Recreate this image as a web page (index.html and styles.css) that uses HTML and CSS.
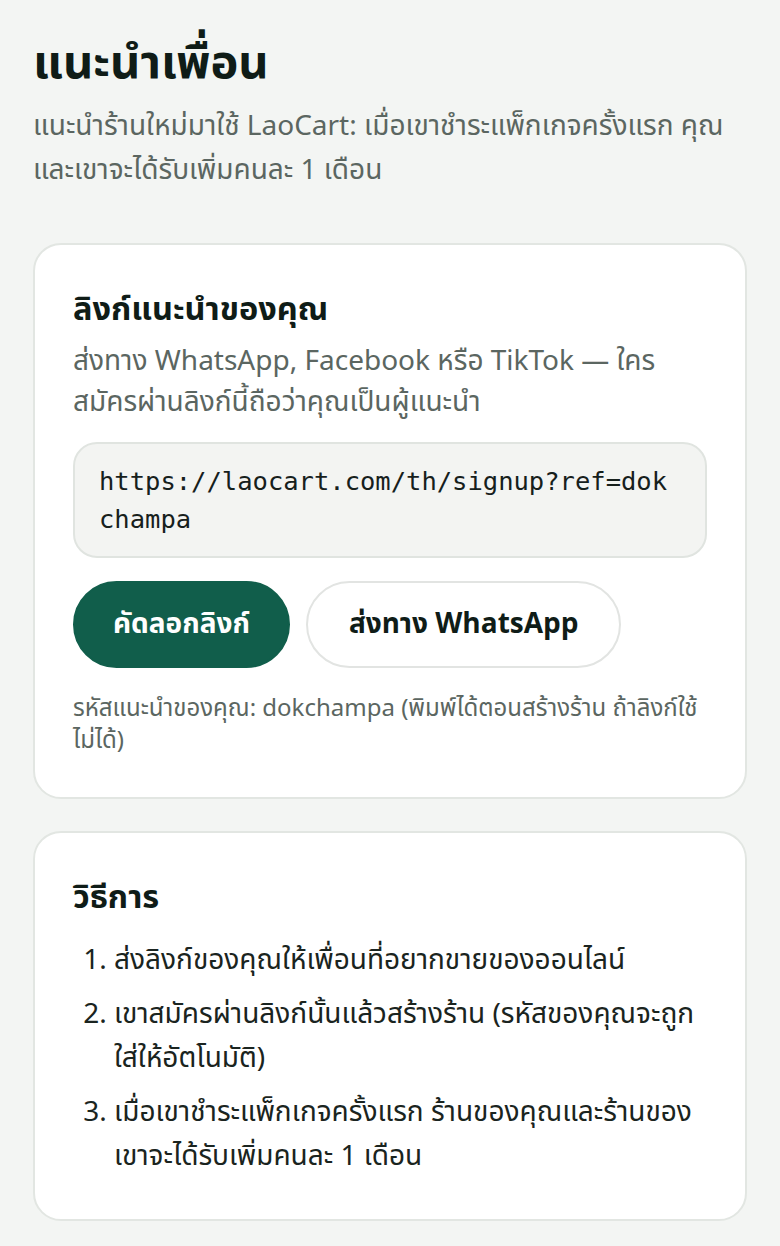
FILE: index.html
```html
<!DOCTYPE html>
<html lang="th">
<head>
<meta charset="utf-8">
<title>แนะนำเพื่อน</title>
<link rel="stylesheet" href="styles.css">
</head>
<body>
<main class="page">
  <h1 class="title">แนะนำเพื่อน</h1>
  <p class="lead">แนะนำร้านใหม่มาใช้ LaoCart: เมื่อเขาชำระแพ็กเกจครั้งแรก คุณและเขาจะได้รับเพิ่มคนละ 1 เดือน</p>

  <section class="card">
    <h2 class="card-title">ลิงก์แนะนำของคุณ</h2>
    <p class="card-desc">ส่งทาง WhatsApp, Facebook หรือ TikTok — ใครสมัครผ่านลิงก์นี้ถือว่าคุณเป็นผู้แนะนำ</p>
    <div class="code-box">https://laocart.com/th/signup?ref=dokchampa</div>
    <div class="actions">
      <button class="btn btn-primary">คัดลอกลิงก์</button>
      <button class="btn btn-outline">ส่งทาง WhatsApp</button>
    </div>
    <p class="note">รหัสแนะนำของคุณ: dokchampa (พิมพ์ได้ตอนสร้างร้าน ถ้าลิงก์ใช้ไม่ได้)</p>
  </section>

  <section class="card">
    <h2 class="card-title">วิธีการ</h2>
    <ol class="steps">
      <li>ส่งลิงก์ของคุณให้เพื่อนที่อยากขายของออนไลน์</li>
      <li>เขาสมัครผ่านลิงก์นั้นแล้วสร้างร้าน (รหัสของคุณจะถูกใส่ให้อัตโนมัติ)</li>
      <li>เมื่อเขาชำระแพ็กเกจครั้งแรก ร้านของคุณและร้านของเขาจะได้รับเพิ่มคนละ 1 เดือน</li>
    </ol>
  </section>
</main>
</body>
</html>
```

FILE: styles.css
```css
* { box-sizing: border-box; }
html, body { margin: 0; padding: 0; }
body {
  background: #f3f5f3;
  font-family: "Noto Sans Thai", "Noto Sans", sans-serif;
  color: #13201b;
}
.page {
  padding: 34px 33px 24px;
  display: flex;
  flex-direction: column;
}
.title {
  margin: 0;
  font-size: 47px;
  line-height: 60px;
  font-weight: 700;
  color: #0f1c17;
}
.lead {
  margin: 11px 0 0;
  font-size: 28px;
  line-height: 44px;
  color: #5b6661;
}
.card {
  background: #ffffff;
  border: 2px solid #e2e6e2;
  border-radius: 28px;
  padding: 40px 38px;
  margin-top: 50px;
}
.card + .card { margin-top: 32px; }
.card-title {
  margin: 0;
  font-size: 32.5px;
  line-height: 52px;
  font-weight: 700;
  color: #0f1c17;
}
.card-desc {
  margin: 4px 0 0;
  font-size: 28px;
  line-height: 41px;
  color: #5b6661;
}
.code-box {
  margin-top: 19px;
  background: #f3f4f2;
  border: 2px solid #e0e4e0;
  border-radius: 24px;
  padding: 18px 24px;
  font-family: "DejaVu Sans Mono", monospace;
  font-size: 25.5px;
  line-height: 38px;
  color: #16201c;
  word-break: break-all;
}
.actions {
  margin-top: 23px;
  display: flex;
  gap: 16px;
}
.btn {
  font-family: "Noto Sans Thai", "Noto Sans", sans-serif;
  font-size: 28px;
  font-weight: 700;
  line-height: 38px;
  height: 87px;
  border-radius: 44px;
  padding: 0 38px;
  cursor: pointer;
}
.btn-primary {
  background: #115e4b;
  color: #ffffff;
  border: 2px solid #115e4b;
}
.btn-outline {
  background: #ffffff;
  color: #0f1c17;
  border: 2px solid #e2e4e2;
  padding: 0 41px;
}
.note {
  margin: 25px 0 0;
  font-size: 24px;
  line-height: 32px;
  color: #5b6661;
}
.steps {
  margin: 14px 0 0;
  padding-left: 41px;
  font-size: 28px;
  line-height: 44px;
  color: #1a2420;
}
.steps li + li { margin-top: 10px; }
```
